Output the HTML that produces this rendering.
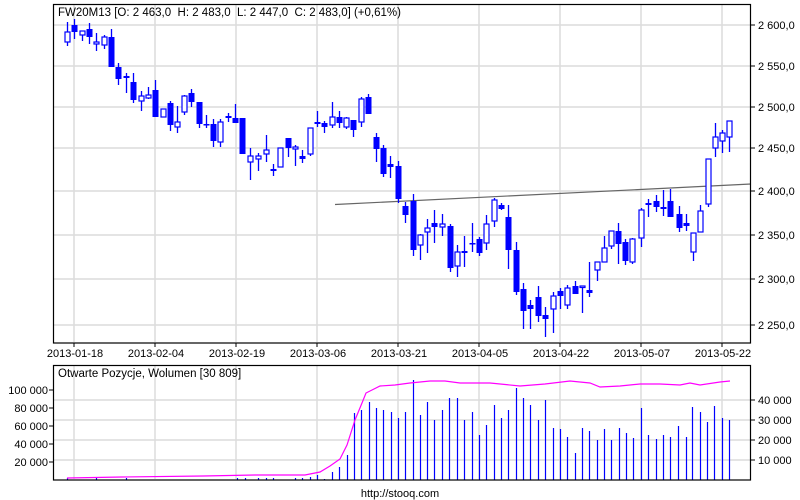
<!DOCTYPE html>
<html><head><meta charset="utf-8"><style>
html,body{margin:0;padding:0;background:#fff;}
svg{display:block;font-family:"Liberation Sans",sans-serif;font-size:11px;}
.pre{white-space:pre;}
</style></head><body>
<svg id="s" width="800" height="500" viewBox="0 0 800 500" xmlns="http://www.w3.org/2000/svg">
<g id="grid" stroke="#dcdcdc" stroke-width="1.5"></g>
<line x1="335" y1="204.5" x2="751" y2="184" stroke="#666" stroke-width="1.2"/>
<g id="c"></g>
<g id="v" stroke="#0000ff" stroke-width="1.2"></g>
<polyline id="oi" fill="none" stroke="#ff00ff" stroke-width="1.2"/>
<rect x="53.5" y="4.5" width="697" height="338.5" fill="none" stroke="#000" stroke-width="1.2"/>
<rect x="53.5" y="365.5" width="697" height="114.5" fill="none" stroke="#000" stroke-width="1.2"/>
<text class="pre" x="58" y="16" style="font-size:11.5px">FW20M13 [O: 2 463,0  H: 2 483,0  L: 2 447,0  C: 2 483,0] (+0,61%)</text>
<text x="58" y="377" style="font-size:11.5px">Otwarte Pozycje, Wolumen [30 809]</text>
<g text-anchor="start">
<text x="758" y="29">2 600,0</text><text x="758" y="70">2 550,0</text><text x="758" y="111">2 500,0</text>
<text x="758" y="152">2 450,0</text><text x="758" y="195">2 400,0</text><text x="758" y="239">2 350,0</text>
<text x="758" y="283">2 300,0</text><text x="758" y="329">2 250,0</text>
<text x="758" y="404">40 000</text><text x="758" y="424">30 000</text><text x="758" y="444">20 000</text><text x="758" y="464">10 000</text>
</g>
<g text-anchor="end">
<text x="48" y="394">100 000</text><text x="48" y="412">80 000</text><text x="48" y="430">60 000</text><text x="48" y="448">40 000</text><text x="48" y="466">20 000</text>
</g>
<g text-anchor="middle">
<text x="75" y="357">2013-01-18</text><text x="156" y="357">2013-02-04</text><text x="237" y="357">2013-02-19</text>
<text x="318" y="357">2013-03-06</text><text x="399" y="357">2013-03-21</text><text x="480" y="357">2013-04-05</text>
<text x="561" y="357">2013-04-22</text><text x="642" y="357">2013-05-07</text><text x="723" y="357">2013-05-22</text>
<text x="400" y="497">http://stooq.com</text>
</g>
<g id="ticks" stroke="#000" stroke-width="1"></g>
</svg>
<script>
var NS="http://www.w3.org/2000/svg";
function el(p,n,a){var e=document.createElementNS(NS,n);for(var k in a)e.setAttribute(k,a[k]);p.appendChild(e);return e;}
var g=document.getElementById('grid'),t=document.getElementById('ticks');
[74,155,236,317,398,479,560,641,722].forEach(function(x){el(g,'line',{x1:x,y1:5,x2:x,y2:342});el(g,'line',{x1:x,y1:366,x2:x,y2:479});el(t,'line',{x1:x,y1:343,x2:x,y2:347});});
[25,66,107,148,191,235,279,325].forEach(function(y){el(g,'line',{x1:54,y1:y,x2:750,y2:y});el(t,'line',{x1:751,y1:y,x2:755,y2:y});});
[400,420,440,460].forEach(function(y){el(g,'line',{x1:54,y1:y,x2:750,y2:y});el(t,'line',{x1:751,y1:y,x2:755,y2:y});});
[390,408,426,444,462].forEach(function(y){el(t,'line',{x1:49,y1:y,x2:53,y2:y});});
var C=[[67,22,46,32,42,0],[74,19,39,25,32,1],[82,31,41,31,35,0],[89,23,44,29,37,1],[96,33,51,42,44,0],[104,35,49,37,45,0],[111,29,67,37,67,1],[118,63,85,67,79,1],[126,73,93,76,78,1],[133,73,103,82,100,1],[141,91,111,96,101,0],[148,87,99,95,98,0],[155,80,117,90,117,1],[163,109,117,109,117,0],[170,101,131,103,125,1],[177,106,133,122,127,0],[184,95,115,96,112,0],[191,89,107,93,102,1],[199,102,128,102,124,1],[206,115,128,124,125,1],[213,119,147,124,141,1],[220,119,147,122,142,0],[228,113,122,116,118,1],[235,104,123,118,123,1],[242,118,154,118,154,1],[250,148,180,156,162,0],[258,153,171,156,159,0],[266,135,162,150,154,0],[273,164,176,169,171,1],[280,148,167,148,167,0],[288,138,157,138,148,1],[295,145,166,147,149,0],[302,150,163,156,159,1],[310,128,156,128,154,0],[317,111,127,122,124,1],[324,121,133,123,127,1],[332,102,128,117,125,0],[339,111,128,117,123,1],[346,117,129,118,127,0],[353,120,137,120,130,1],[361,97,127,99,122,0],[368,94,114,97,114,1],[376,133,162,137,149,1],[383,145,177,148,174,1],[390,156,178,164,167,1],[398,161,203,166,199,1],[405,202,223,206,215,1],[413,194,256,201,250,1],[420,234,260,235,245,0],[427,219,253,228,232,0],[434,210,243,223,227,1],[442,214,236,224,227,0],[450,224,272,226,268,1],[457,245,277,252,266,0],[464,236,267,251,253,1],[472,223,252,243,244,1],[479,237,256,239,253,1],[486,215,250,224,243,0],[494,198,227,200,221,0],[501,203,210,205,209,1],[508,205,269,217,250,1],[516,242,295,250,292,1],[523,283,329,289,311,1],[530,300,329,305,309,1],[538,286,322,297,316,1],[545,307,337,315,319,1],[553,292,333,296,309,0],[560,288,309,291,296,1],[567,285,309,288,305,0],[575,281,294,286,294,1],[582,286,313,286,287,0],[589,262,297,290,293,1],[597,262,281,262,270,0],[604,236,262,248,262,0],[611,231,249,231,246,0],[618,223,264,231,244,1],[625,239,265,242,261,1],[632,238,264,239,262,0],[641,208,247,210,238,0],[648,199,217,203,205,1],[656,195,212,201,207,1],[663,190,216,207,209,1],[670,189,217,201,217,1],[679,206,232,214,228,1],[686,214,231,223,226,1],[693,233,261,233,252,0],[700,205,232,211,232,0],[708,159,207,159,204,0],[715,123,157,137,148,0],[722,130,153,133,141,0],[729,121,152,121,137,0]];
var cg=document.getElementById('c');
C.forEach(function(c){var x=c[0]+0.5;
el(cg,'line',{x1:x,y1:c[1],x2:x,y2:c[2],stroke:'#0000ff','stroke-width':1.3});
var h=Math.max(c[4]-c[3],1.5);
if(c[5])el(cg,'rect',{x:x-3,y:c[3],width:6,height:h,fill:'#0000ff'});
else el(cg,'rect',{x:x-2.5,y:c[3],width:5,height:h,fill:'#fff',stroke:'#0000ff','stroke-width':1.2});});
var V=[[67,478],[96,478],[126,478],[237,478],[245,478],[258,478],[266,478],[273,478],[295,478],[302,478],[310,477],[317,475],[324,479],[332,472],[339,467],[347,455],[354,413],[361,410],[369,402],[376,408],[383,410],[391,412],[398,418],[405,412],[413,380],[420,415],[427,402],[434,420],[442,410],[449,398],[457,398],[464,420],[472,412],[479,435],[486,425],[494,405],[501,418],[508,410],[516,388],[523,398],[530,405],[538,420],[545,400],[553,428],[560,429],[567,437],[575,453],[582,428],[589,431],[597,440],[604,429],[611,440],[619,428],[626,433],[633,438],[641,408],[648,435],[656,439],[663,435],[670,437],[678,426],[686,437],[692,407],[700,412],[707,422],[714,406],[722,418],[729,420]];
var vg=document.getElementById('v');
V.forEach(function(b){el(vg,'line',{x1:b[0]+0.5,y1:b[1],x2:b[0]+0.5,y2:480});});
document.getElementById('oi').setAttribute('points',"67,478 122,477 203,476 255,475 305,475 320,472 330,466 340,459 347,445 355,420 362,403 366,393 372,390 380,386 395,385 410,383 430,381 445,381 460,383 490,383 520,386 545,384 570,381 590,383 600,387 620,386 640,384 660,384 680,385 690,383 700,385 720,382 730,381");
</script>
</body></html>
